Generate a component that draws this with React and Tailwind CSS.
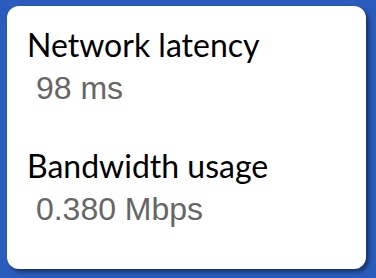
export default function App() {
  return (
    <div className="w-[376px] h-[278px] bg-[#2a5cbd] pt-[6px] pl-[7px]">
      <div className="w-[359px] h-[263px] bg-white rounded-[12px] shadow-[3px_3px_4px_rgba(0,0,0,0.45)] pt-[21px] pl-[20px]">
        <div className="font-['Lato',sans-serif] text-[32px] leading-[35px] text-black">Network latency</div>
        <div className="mt-[9px] font-['Liberation_Sans',Arial,sans-serif] text-[32px] leading-[35px] text-[#666] whitespace-pre">{" 98 ms"}</div>
        <div className="mt-[42px] font-['Lato',sans-serif] text-[32px] leading-[35px] text-black">Bandwidth usage</div>
        <div className="mt-[9px] font-['Liberation_Sans',Arial,sans-serif] text-[32px] leading-[35px] text-[#666] whitespace-pre">{" 0.380 Mbps"}</div>
      </div>
    </div>
  );
}
